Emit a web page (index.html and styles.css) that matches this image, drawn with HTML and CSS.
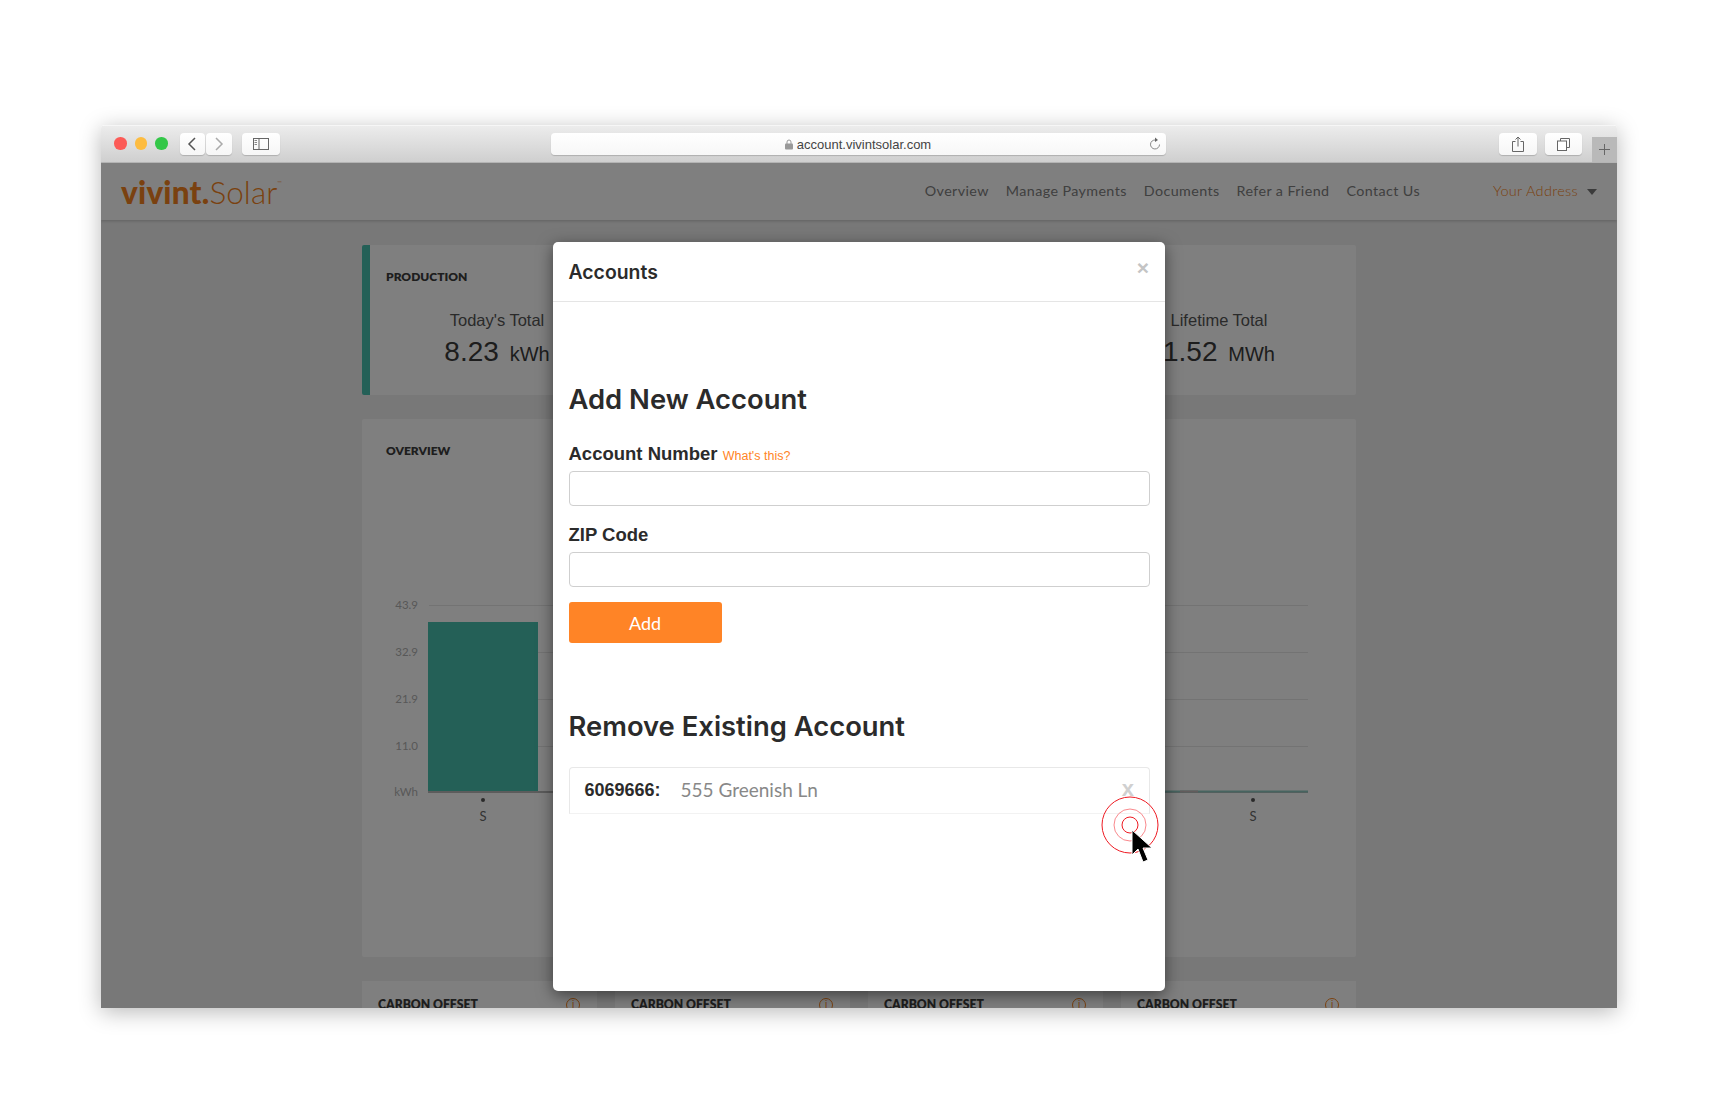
FILE: index.html
```html
<!DOCTYPE html>
<html lang="en">
<head>
  <meta charset="UTF-8" />
  <title>Accounts - Vivint Solar</title>
  <link rel="stylesheet" href="styles.css">
</head>
<body>

  <div class="window">

    <div class="toolbar">
      <div class="lights">
        <span class="light red"></span>
        <span class="light yellow"></span>
        <span class="light green"></span>
      </div>
      <div class="nav-buttons">
        <span class="tool-btn arrow-btn">
          <svg width="10" height="14" viewBox="0 0 10 14"><path d="M8 1 L2 7 L8 13" fill="none" stroke="#555" stroke-width="1.5"/></svg>
        </span>
        <span class="tool-btn arrow-btn">
          <svg width="10" height="14" viewBox="0 0 10 14"><path d="M2 1 L8 7 L2 13" fill="none" stroke="#aaa" stroke-width="1.5"/></svg>
        </span>
      </div>
      <span class="tool-btn sidebar-btn">
        <svg width="16" height="12" viewBox="0 0 16 12"><rect x="0.5" y="0.5" width="15" height="11" fill="none" stroke="#666"/><path d="M6 0.5 V11.5" stroke="#666"/><path d="M1.5 2.5 H4 M1.5 4.5 H4 M1.5 6.5 H4" stroke="#888"/></svg>
      </span>
      <div class="url-bar">
        <span class="url">
          <svg width="8" height="11" viewBox="0 0 8 11"><path d="M2 5 V3 a2 2 0 0 1 4 0 V5" fill="none" stroke="#999" stroke-width="1"/><rect y="4.5" width="8" height="6" rx="1" fill="#999"/></svg>
          account.vivintsolar.com
        </span>
        <svg class="reload" width="12" height="14" viewBox="0 0 12 14"><path d="M6.5 3 A4.5 4.5 0 1 0 10.5 7.5" fill="none" stroke="#888" stroke-width="1"/><path d="M6 0.5 L9 3 L6 5 Z" fill="#666"/></svg>
      </div>
      <span class="tool-btn share-btn">
        <svg width="12" height="16" viewBox="0 0 12 16"><path d="M3.5 5.5 H0.5 V15.5 H11.5 V5.5 H8.5" fill="none" stroke="#666"/><path d="M6 10.5 V1 M3.5 3.5 L6 1 L8.5 3.5" fill="none" stroke="#666"/></svg>
      </span>
      <span class="tool-btn tabs-btn">
        <svg width="13" height="13" viewBox="0 0 13 13"><rect x="0.5" y="3" width="9" height="9.5" fill="#fff" stroke="#666"/><path d="M3.5 3 V0.5 H12.5 V9.5 H9.5" fill="none" stroke="#666"/></svg>
      </span>
      <span class="new-tab">
        <svg width="11" height="11" viewBox="0 0 11 11"><path d="M5.5 0 V11 M0 5.5 H11" stroke="#666" stroke-width="1"/></svg>
      </span>
    </div>

    <div class="page">
      <header class="site-nav">
        <div class="logo"><b>vivint.</b>Solar<sup>™</sup></div>
        <nav class="menu">
          <a>Overview</a>
          <a>Manage Payments</a>
          <a>Documents</a>
          <a>Refer a Friend</a>
          <a>Contact Us</a>
        </nav>
        <div class="address">Your Address</div>
        <span class="caret"></span>
      </header>

      <main class="dashboard">
        <section class="card production">
          <h3 class="card-title">PRODUCTION</h3>
          <div class="stats">
            <div class="stat">
              <div class="stat-label">Today's Total</div>
              <div class="stat-value">8.23 <small>kWh</small></div>
            </div>
            <div class="stat">
              <div class="stat-label">Lifetime Total</div>
              <div class="stat-value">1.52 <small>MWh</small></div>
            </div>
          </div>
        </section>

        <section class="card overview">
          <h3 class="card-title">OVERVIEW</h3>
          <svg class="chart" width="994" height="475" viewBox="0 0 994 475">
            <g stroke="#e6e6e6">
              <path d="M67 123.5 H946 M67 170.5 H946 M67 217.5 H946 M67 264.5 H946"/>
            </g>
            <rect x="66" y="140" width="110" height="170" fill="#48c0ae"/>
            <path d="M66 310 H946" stroke="#b8b8b8" stroke-width="2"/>
            <path d="M802 309.5 H946" stroke="#8fc9c0" stroke-width="2"/>
            <path d="M818 309.5 H836" stroke="#c4b8b8" stroke-width="2"/>
            <g class="axis-label" text-anchor="end">
              <text x="56" y="127">43.9</text>
              <text x="56" y="174">32.9</text>
              <text x="56" y="221">21.9</text>
              <text x="56" y="268">11.0</text>
              <text x="56" y="314">kWh</text>
            </g>
            <circle cx="121" cy="318" r="2" fill="#555"/>
            <circle cx="891" cy="318" r="2" fill="#555"/>
            <text class="day-label" x="121" y="339" text-anchor="middle">S</text>
            <text class="day-label" x="891" y="339" text-anchor="middle">S</text>
          </svg>
        </section>

        <div class="offsets">
          <section class="offset"><h4>CARBON OFFSET</h4><span class="info">i</span></section>
          <section class="offset"><h4>CARBON OFFSET</h4><span class="info">i</span></section>
          <section class="offset"><h4>CARBON OFFSET</h4><span class="info">i</span></section>
          <section class="offset"><h4>CARBON OFFSET</h4><span class="info">i</span></section>
        </div>
      </main>

      <div class="backdrop"></div>

      <div class="modal">
        <div class="modal-header">
          <h2>Accounts</h2>
          <span class="close">×</span>
        </div>
        <div class="modal-body">
          <h1>Add New Account</h1>
          <label class="field-label">Account Number <a class="help">What's this?</a></label>
          <input class="field" type="text">
          <label class="field-label zip">ZIP Code</label>
          <input class="field zip-field" type="text">
          <button class="add-btn">Add</button>

          <h1 class="remove-title">Remove Existing Account</h1>
          <div class="account-row">
            <span class="acct-number">6069666:</span>
            <span class="acct-address">555 Greenish Ln</span>
            <span class="acct-remove">x</span>
          </div>
        </div>
      </div>

      <div class="click-target">
        <span class="ring ring-big"></span>
        <span class="ring ring-mid"></span>
        <span class="ring ring-small"></span>
      </div>
      <svg class="pointer" width="22" height="36" viewBox="0 0 22 36">
        <path d="M1 1 L1 26 L7 20 L12 33 L17 31 L12 19 L21 19 Z" fill="#000" stroke="#fff" stroke-width="1"/>
      </svg>
    </div>

  </div>

</body>
</html>
```

FILE: styles.css
```css
html, body {
  margin: 0; padding: 0;
  height: 100%;
  background: #fff;
  overflow: hidden;
}
body {
  padding: 125px 0 0 101px;
  box-sizing: border-box;
  font-family: "Liberation Sans", sans-serif;
}
.window {
  width: 1516px;
  height: 883px;
  border-radius: 4px 4px 0 0;
  box-shadow: 0 4px 22px rgba(0,0,0,0.28);
  display: flex;
  flex-direction: column;
  overflow: hidden;
}

/* browser chrome */
.toolbar {
  height: 38px;
  flex: none;
  box-sizing: border-box;
  display: flex;
  align-items: flex-start;
  padding-top: 7px;
  background: linear-gradient(#ececec, #cfcfcf);
  border-top: 1px solid #f6f6f6;
  border-bottom: 1px solid #b4b4b4;
  position: relative;
}
.lights {
  display: flex;
  gap: 8px;
  margin: 4px 0 0 13px;
}
.light {
  width: 12.5px;
  height: 12.5px;
  border-radius: 50%;
}
.red { background: #fc5b57; }
.yellow { background: #fdbc40; }
.green { background: #33c748; }
.tool-btn {
  height: 22px;
  background: linear-gradient(#fff, #f6f6f6);
  border-radius: 4px;
  box-shadow: 0 1px 1px rgba(0,0,0,0.18);
  display: flex;
  align-items: center;
  justify-content: center;
}
.nav-buttons {
  display: flex;
  gap: 1px;
  margin-left: 12px;
}
.arrow-btn { width: 25.5px; }
.sidebar-btn { width: 38px; margin-left: 10px; }
.url-bar {
  width: 615px;
  height: 22px;
  margin-left: 271px;
  background: linear-gradient(#fff, #f7f7f7);
  border-radius: 4px;
  box-shadow: 0 1px 1px rgba(0,0,0,0.18);
  display: flex;
  align-items: center;
  justify-content: center;
  position: relative;
}
.url {
  font-size: 13px;
  color: #444;
  display: flex;
  align-items: center;
  gap: 4px;
}
.reload {
  position: absolute;
  right: 5px;
  top: 4px;
}
.share-btn { width: 38px; margin-left: 333px; }
.tabs-btn { width: 37px; margin-left: 8px; }
.new-tab {
  position: absolute;
  right: 0;
  bottom: 0;
  width: 25px;
  height: 25px;
  background: #b9b9b9;
  display: flex;
  align-items: center;
  justify-content: center;
}

/* page under the backdrop */
.page {
  flex: 1;
  position: relative;
  overflow: hidden;
  background: #f0f0f0;
}
.site-nav {
  height: 57px;
  background: #fff;
  box-shadow: 0 1px 3px rgba(0,0,0,0.2);
  display: flex;
  align-items: center;
  padding: 0 20px 0 20px;
  position: relative;
}
.logo {
  font-family: Lato, sans-serif;
  font-size: 31.5px;
  font-weight: 300;
  letter-spacing: 0.1px;
  color: #f58320;
  margin-right: auto;
  margin-top: 1px;
}
.logo b { font-weight: 900; letter-spacing: 0.2px; }
.logo sup { font-size: 6px; vertical-align: top; line-height: 20px; }
.menu {
  display: flex;
  gap: 17px;
  font-family: Lato, sans-serif;
  font-size: 14.3px;
  letter-spacing: 0.4px;
  color: #808080;
  margin-top: -2px;
}
.address {
  font-family: Lato, sans-serif;
  font-size: 14.5px;
  font-weight: 300;
  letter-spacing: 0.3px;
  color: #f58320;
  margin: -2px 0 0 73px;
}
.caret {
  width: 0;
  height: 0;
  border-left: 5px solid transparent;
  border-right: 5px solid transparent;
  border-top: 6px solid #777;
  margin-left: 9px;
}
.dashboard {
  width: 994px;
  margin-left: 261px;
  padding-top: 25px;
}
.card {
  background: #fff;
  border-radius: 2px;
  margin-bottom: 24px;
}
.card-title {
  margin: 0;
  font-family: Lato, sans-serif;
  font-size: 12px;
  font-weight: 800;
  color: #3c3c3c;
}
.production {
  height: 150px;
  box-sizing: border-box;
  border-left: 8px solid #48c0ae;
  padding: 24px 17px 0 16px;
}
.stats {
  display: flex;
  justify-content: space-between;
  margin: 24px 0 0 -9px;
}
.stat {
  width: 240px;
  text-align: center;
  color: #555;
}
.stat-label {
  font-size: 16.5px;
  line-height: 24px;
}
.stat-value {
  font-size: 28px;
  line-height: 40px;
  color: #3a3a3a;
}
.stat-value small { font-size: 20px; margin-left: 3px; }
.overview {
  height: 538px;
  margin-bottom: 24px;
}
.overview .card-title {
  padding: 24px 24px 0;
  height: 39px;
}
.chart { display: block; }
.axis-label {
  font-family: Lato, sans-serif;
  font-size: 11.5px;
  fill: #b0b0b0;
}
.day-label {
  font-family: Lato, sans-serif;
  font-size: 13px;
  fill: #666;
}
.offsets {
  display: grid;
  grid-template-columns: repeat(4, 235px);
  gap: 18px;
}
.offset {
  background: #fff;
  height: 80px;
  padding: 16px 15px 0 16px;
  box-sizing: border-box;
  display: flex;
  justify-content: space-between;
  align-items: flex-start;
}
.offset h4 {
  margin: 0;
  font-family: Lato, sans-serif;
  font-size: 12.2px;
  line-height: 15px;
  font-weight: 800;
  color: #3c3c3c;
}
.info {
  width: 12px;
  height: 12px;
  border: 1px solid #f58320;
  border-radius: 50%;
  color: #f58320;
  font-size: 10px;
  line-height: 12px;
  text-align: center;
  margin: 1px 2px 0 0;
}
.backdrop {
  position: absolute;
  top: 0; left: 0;
  width: 100%; height: 100%;
  background-color: rgba(0, 0, 0, 0.5);
}

/* modal */
.modal {
  position: absolute;
  left: 452px;
  top: 79px;
  width: 612px;
  height: 749px;
  background: #fff;
  border-radius: 5px;
  box-shadow: 0 4px 16px rgba(0,0,0,0.5);
}
.modal-header {
  height: 60px;
  box-sizing: border-box;
  border-bottom: 1px solid #e5e5e5;
  padding: 0 16px 0 15.5px;
  display: flex;
  justify-content: space-between;
}
.modal-header h2 {
  margin: 18px 0 0;
  font-family: Inter, sans-serif;
  font-size: 19.4px;
  line-height: 24px;
  font-weight: 600;
  color: #2b2b2b;
}
.close {
  font-size: 21px;
  font-weight: bold;
  color: #c4c4c4;
  line-height: 24px;
  margin-top: 14px;
}
.modal-body {
  padding: 0 15px 0 15.5px;
}
.modal-body h1 {
  margin: 78px 0 0;
  font-family: Inter, sans-serif;
  font-size: 27.4px;
  line-height: 38px;
  font-weight: 600;
  color: #2b2b2b;
}
.field-label {
  display: block;
  margin-top: 25px;
  font-size: 18.5px;
  line-height: 22px;
  font-weight: 700;
  color: #2b2b2b;
}
.help {
  font-size: 12.5px;
  font-weight: 400;
  color: #ff8426;
}
.field {
  display: block;
  width: 100%;
  height: 35px;
  box-sizing: border-box;
  margin-top: 4px;
  border: 1.5px solid #cfcfcf;
  border-radius: 4px;
  background: #fff;
}
.field-label.zip { margin-top: 18px; }
.field.zip-field { margin-top: 6px; }
.add-btn {
  display: block;
  width: 153px;
  height: 41px;
  margin-top: 15px;
  background: #ff8426;
  color: #fff;
  border: none;
  border-radius: 3px;
  font-family: Lato, sans-serif;
  font-size: 18px;
}
.modal-body h1.remove-title { margin-top: 64px; }
.account-row {
  height: 47px;
  box-sizing: border-box;
  margin-top: 22px;
  border: 1.5px solid #e8e8e8;
  border-bottom: 1px solid #f2f2f2;
  border-radius: 4px 4px 0 0;
  display: flex;
  align-items: center;
  padding: 0 15px;
}
.acct-number {
  font-size: 18px;
  font-weight: 700;
  color: #2b2b2b;
  width: 96px;
}
.acct-address {
  font-family: Lato, sans-serif;
  font-size: 19px;
  color: #888;
  flex: 1;
  margin-top: -2px;
}
.acct-remove {
  font-size: 22px;
  font-weight: 700;
  color: #d0d0d0;
  margin-top: -3px;
}

/* click marker and cursor sit on top of everything */
.click-target {
  position: absolute;
  left: 1029px;
  top: 662px;
  width: 0;
  height: 0;
}
.ring {
  position: absolute;
  border-radius: 50%;
  box-sizing: border-box;
  transform: translate(-50%, -50%);
}
.ring-big { width: 57px; height: 57px; border: 1.2px solid #ee1a22; }
.ring-mid { width: 33px; height: 33px; border: 1px solid #f9898d; }
.ring-small { width: 17px; height: 17px; border: 1.2px solid #ee1a22; }
.pointer {
  position: absolute;
  left: 1030px;
  top: 666px;
}
```
